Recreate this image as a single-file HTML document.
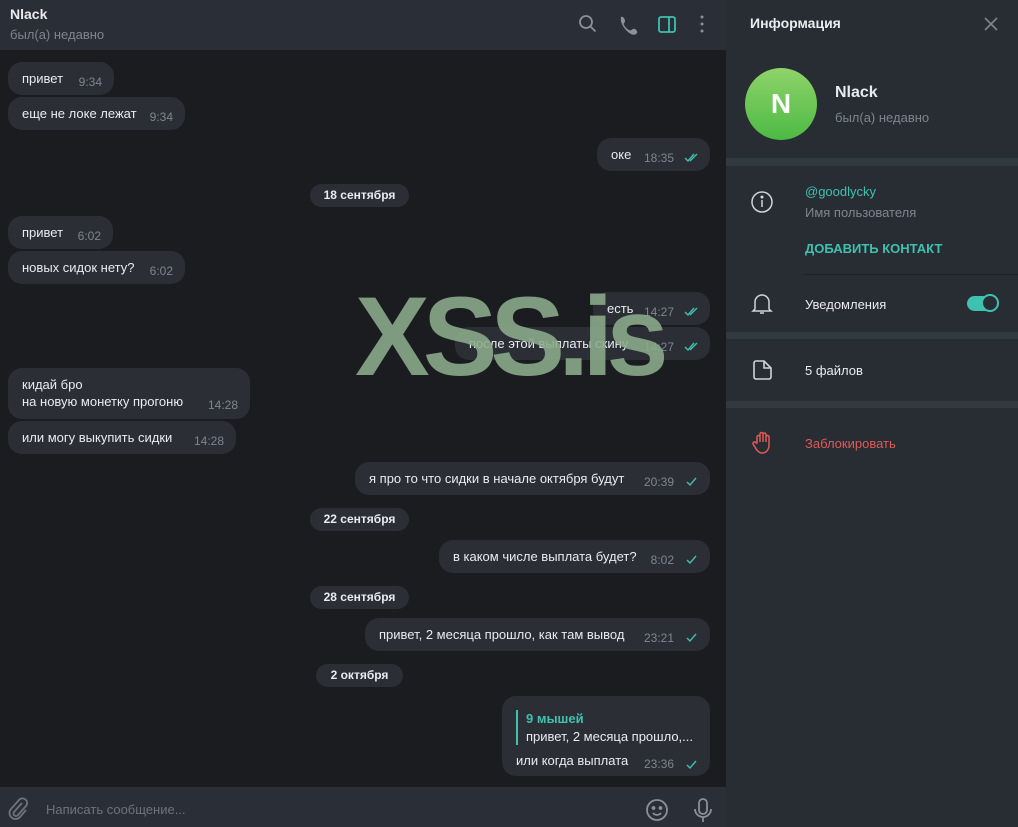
<!DOCTYPE html>
<html><head><meta charset="utf-8"><style>
*{margin:0;padding:0;box-sizing:border-box}
body{width:1018px;height:827px;background:#1b1c20;font-family:"Liberation Sans","DejaVu Sans",sans-serif;font-size:13px;color:#e9ecef;position:relative;overflow:hidden}
.a{position:absolute}
.b{position:absolute;background:#2b2f35;border-radius:14px;height:33px;line-height:33px;padding-left:14px;white-space:nowrap}
.b .t{position:absolute;right:12px;top:4px;font-size:12px;color:#7d858e}
.r .t{right:36px}
.ck{position:absolute;right:10px;top:15px}
.d{position:absolute;background:#2b2f35;border-radius:12px;height:23px;line-height:23px;text-align:center;font-weight:bold;font-size:12px}
</style></head><body>
<div class="a" style="left:0;top:0;width:726px;height:50px;background:#2a2f37"></div>
<div class="a" style="left:10px;top:6px;font-weight:bold;font-size:14px">Nlack</div>
<div class="a" style="left:10px;top:27px;color:#7d858e">был(а) недавно</div>
<svg class="a" style="left:576px;top:12px" width="140" height="26" fill="none" stroke="#8a9199" stroke-width="1.8">
<circle cx="10" cy="10" r="6"/><path d="M14.5 14.5l5 5"/>
<path d="M45 5c2-1 4 2 4 4s-2 2-1 4 3 4 5 5 2 0 4-1 5 2 4 4c-2 3-6 2-10-2s-7-9-6-14z" fill="#8a9199" stroke="none"/>
<rect x="83" y="5" width="16" height="15" rx="2" stroke="#3fc1b0"/><path d="M93 5v15" stroke="#3fc1b0"/>
<circle cx="126" cy="5" r="1.5" fill="#8a9199" stroke="none"/><circle cx="126" cy="12" r="1.5" fill="#8a9199" stroke="none"/><circle cx="126" cy="19" r="1.5" fill="#8a9199" stroke="none"/>
</svg>

<div class="b" style="left:8px;top:62px;width:106px">привет<span class="t">9:34</span></div>
<div class="b" style="left:8px;top:97px;width:177px">еще не локе лежат<span class="t">9:34</span></div>
<div class="b r" style="left:597px;top:138px;width:113px">оке<span class="t">18:35</span><svg class="ck" width="16" height="10" fill="none" stroke="#3fc1b0" stroke-width="1.4"><path d="M1 5l3 3 6-7M6 8l7-7"/></svg></div>
<div class="d" style="left:310px;top:184px;width:99px">18 сентября</div>
<div class="b" style="left:8px;top:216px;width:105px">привет<span class="t">6:02</span></div>
<div class="b" style="left:8px;top:251px;width:177px">новых сидок нету?<span class="t">6:02</span></div>
<div class="b r" style="left:593px;top:292px;width:117px">есть<span class="t">14:27</span><svg class="ck" width="16" height="10" fill="none" stroke="#3fc1b0" stroke-width="1.4"><path d="M1 5l3 3 6-7M6 8l7-7"/></svg></div>
<div class="b r" style="left:455px;top:327px;width:255px">после этой выплаты скину<span class="t">14:27</span><svg class="ck" width="16" height="10" fill="none" stroke="#3fc1b0" stroke-width="1.4"><path d="M1 5l3 3 6-7M6 8l7-7"/></svg></div>
<div class="b" style="left:8px;top:368px;width:242px;height:51px;line-height:17px;padding-top:8px">кидай бро<br>на новую монетку прогоню<span class="t" style="top:auto;bottom:5px;line-height:17px">14:28</span></div>
<div class="b" style="left:8px;top:421px;width:228px">или могу выкупить сидки<span class="t">14:28</span></div>
<div class="b r" style="left:355px;top:462px;width:355px">я про то что сидки в начале октября будут<span class="t">20:39</span><svg class="ck" width="16" height="10" fill="none" stroke="#3fc1b0" stroke-width="1.4"><path d="M3 5l3 3 6-7"/></svg></div>
<div class="d" style="left:310px;top:508px;width:99px">22 сентября</div>
<div class="b r" style="left:439px;top:540px;width:271px">в каком числе выплата будет?<span class="t">8:02</span><svg class="ck" width="16" height="10" fill="none" stroke="#3fc1b0" stroke-width="1.4"><path d="M3 5l3 3 6-7"/></svg></div>
<div class="d" style="left:310px;top:586px;width:99px">28 сентября</div>
<div class="b r" style="left:365px;top:618px;width:345px">привет, 2 месяца прошло, как там вывод<span class="t">23:21</span><svg class="ck" width="16" height="10" fill="none" stroke="#3fc1b0" stroke-width="1.4"><path d="M3 5l3 3 6-7"/></svg></div>
<div class="d" style="left:316px;top:664px;width:87px">2 октября</div>
<div class="b r" style="left:502px;top:696px;width:208px;height:80px;line-height:17px;padding:0">
<div class="a" style="left:14px;top:14px;width:2px;height:35px;background:#3fc1b0"></div>
<div class="a" style="left:24px;top:14px;color:#3fc1b0;font-weight:bold">9 мышей</div>
<div class="a" style="left:24px;top:32px">привет, 2 месяца прошло,...</div>
<div class="a" style="left:14px;top:56px">или когда выплата</div>
<span class="t" style="top:60px;line-height:17px">23:36</span><svg class="ck" style="top:64px" width="16" height="10" fill="none" stroke="#3fc1b0" stroke-width="1.4"><path d="M3 5l3 3 6-7"/></svg></div>

<div class="a" style="left:355px;top:272px;font-size:112px;font-weight:bold;color:rgba(140,172,140,0.88);letter-spacing:-7px;line-height:130px">XSS.is</div>

<div class="a" style="left:0;top:787px;width:726px;height:40px;background:#2a2f37"></div>
<svg class="a" style="left:6px;top:797px" width="24" height="24" fill="none" stroke="#6c737b" stroke-width="1.8"><path d="M16 6l-8 9a2.5 2.5 0 0 0 4 3l8-9a4.5 4.5 0 0 0-7-6l-8 9a6 6 0 0 0 9 8l6-7"/></svg>
<div class="a" style="left:46px;top:802px;color:#6c737b">Написать сообщение...</div>
<svg class="a" style="left:645px;top:797px" width="70" height="26" fill="none" stroke="#8a9199" stroke-width="1.8"><circle cx="12" cy="13" r="10"/><circle cx="8.5" cy="11" r="1" fill="#8a9199"/><circle cx="15.5" cy="11" r="1" fill="#8a9199"/><path d="M8 16c2 2.5 6 2.5 8 0"/><rect x="54" y="2" width="8" height="15" rx="4"/><path d="M50 12a8 8 0 0 0 16 0M58 20v5"/></svg>

<div class="a" style="left:726px;top:0;width:292px;height:827px;background:#282d34"></div>
<div class="a" style="left:750px;top:15px;font-size:14px;font-weight:bold">Информация</div>
<svg class="a" style="left:984px;top:17px" width="14" height="14" stroke="#7d858e" stroke-width="1.6"><path d="M1 1l12 12M13 1L1 13"/></svg>
<div class="a" style="left:745px;top:68px;width:72px;height:72px;border-radius:50%;background:linear-gradient(#8fd36a,#4cba44);color:#fff;font-size:28px;font-weight:bold;text-align:center;line-height:72px">N</div>
<div class="a" style="left:835px;top:84px;font-size:16px;font-weight:bold">Nlack</div>
<div class="a" style="left:835px;top:110px;color:#7d858e">был(а) недавно</div>
<div class="a" style="left:726px;top:158px;width:292px;height:8px;background:#323a41"></div>
<svg class="a" style="left:750px;top:190px" width="24" height="24" fill="none" stroke="#d0d4d8" stroke-width="1.5"><circle cx="12" cy="12" r="10"/><path d="M12 10v7"/><circle cx="12" cy="7" r=".8" fill="#d0d4d8"/></svg>
<div class="a" style="left:805px;top:184px;color:#3fc1b0">@goodlycky</div>
<div class="a" style="left:805px;top:205px;color:#7d858e">Имя пользователя</div>
<div class="a" style="left:805px;top:241px;color:#3fc1b0;font-weight:bold">ДОБАВИТЬ КОНТАКТ</div>
<div class="a" style="left:803px;top:274px;width:215px;height:1px;background:#1f2328"></div>
<svg class="a" style="left:751px;top:292px" width="22" height="24" fill="none" stroke="#d0d4d8" stroke-width="1.5"><path d="M4 17V10a7 7 0 0 1 14 0v7l2 2H2z M9 21h4"/></svg>
<div class="a" style="left:805px;top:297px">Уведомления</div>
<div class="a" style="left:967px;top:296px;width:30px;height:15px;border-radius:8px;background:#3fc1b0"></div>
<div class="a" style="left:981px;top:294px;width:18px;height:18px;border-radius:50%;background:#282d34;border:2px solid #3fc1b0"></div>
<div class="a" style="left:726px;top:332px;width:292px;height:7px;background:#323a41"></div>
<svg class="a" style="left:752px;top:359px" width="22" height="22" fill="none" stroke="#d0d4d8" stroke-width="1.6"><path d="M4 2h8l7 7v9a2 2 0 0 1-2 2H4a2 2 0 0 1-2-2V4a2 2 0 0 1 2-2zM12 2v7h7"/></svg>
<div class="a" style="left:805px;top:363px">5 файлов</div>
<div class="a" style="left:726px;top:401px;width:292px;height:7px;background:#323a41"></div>
<svg class="a" style="left:752px;top:431px" width="22" height="24" fill="none" stroke="#e05a55" stroke-width="1.5"><path d="M5 12V6a1.5 1.5 0 0 1 3 0v5V3a1.5 1.5 0 0 1 3 0v8V3.5a1.5 1.5 0 0 1 3 0V11V6a1.5 1.5 0 0 1 3 0v8c0 5-3 8-7 8-3 0-5-2-7-6l-2-3a1.5 1.5 0 0 1 3-1z"/></svg>
<div class="a" style="left:805px;top:436px;color:#e05a55">Заблокировать</div>
</body></html>
